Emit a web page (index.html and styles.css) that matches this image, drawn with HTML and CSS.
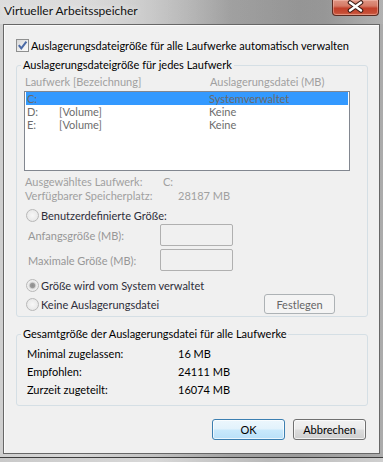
FILE: index.html
```html
<!DOCTYPE html>
<html lang="de">
<head>
    <meta charset="UTF-8">
    <title>Virtueller Arbeitsspeicher</title>
    <link rel="stylesheet" href="styles.css">
</head>
<body>
    <div class="window">
        <div class="titlebar">
            <span class="title">Virtueller Arbeitsspeicher</span>
            <div class="close-btn">
                <svg width="47" height="16" viewBox="0 0 47 16">
                    <path d="M18 3.5 L29 11.5 M29 3.5 L18 11.5" stroke="#3b1c16" stroke-width="4.6" stroke-linecap="round" fill="none"/>
                    <path d="M18 3.5 L29 11.5 M29 3.5 L18 11.5" stroke="#ffffff" stroke-width="2.4" stroke-linecap="round" fill="none"/>
                </svg>
            </div>
        </div>

        <div class="client">
            <div class="check-row">
                <span class="checkbox">
                    <svg width="11" height="11" viewBox="0 0 11 11">
                        <path d="M1.8 5.2 L4.3 8.4 L9.4 1.6" stroke="#4b6aa6" stroke-width="2" fill="none"/>
                    </svg>
                </span>
                <span>Auslagerungsdateigröße für alle Laufwerke automatisch verwalten</span>
            </div>

            <fieldset class="group">
                <legend>Auslagerungsdateigröße für jedes Laufwerk</legend>
                <div class="group-body drives">
                    <div class="list-head">
                        <span class="col-drive-head">Laufwerk [Bezeichnung]</span>
                        <span>Auslagerungsdatei (MB)</span>
                    </div>
                    <div class="listbox">
                        <div class="list-row selected">
                            <span class="col-drive">C:</span>
                            <span class="col-label"></span>
                            <span>Systemverwaltet</span>
                        </div>
                        <div class="list-row">
                            <span class="col-drive">D:</span>
                            <span class="col-label">[Volume]</span>
                            <span>Keine</span>
                        </div>
                        <div class="list-row">
                            <span class="col-drive">E:</span>
                            <span class="col-label">[Volume]</span>
                            <span>Keine</span>
                        </div>
                    </div>

                    <div class="info-row first">
                        <span class="info-label short">Ausgewähltes Laufwerk:</span>
                        <span>C:</span>
                    </div>
                    <div class="info-row">
                        <span class="info-label long">Verfügbarer Speicherplatz:</span>
                        <span>28187 MB</span>
                    </div>

                    <div class="radio-row custom">
                        <span class="radio"></span>
                        <span>Benutzerdefinierte Größe:</span>
                    </div>
                    <div class="size-row first">
                        <span class="size-label">Anfangsgröße (MB):</span>
                        <span class="textbox"></span>
                    </div>
                    <div class="size-row">
                        <span class="size-label">Maximale Größe (MB):</span>
                        <span class="textbox"></span>
                    </div>
                    <div class="radio-row system">
                        <span class="radio checked"></span>
                        <span>Größe wird vom System verwaltet</span>
                    </div>
                    <div class="radio-row none">
                        <span class="radio"></span>
                        <span>Keine Auslagerungsdatei</span>
                        <button class="btn btn-set">Festlegen</button>
                    </div>
                </div>
            </fieldset>

            <fieldset class="group totals">
                <legend>Gesamtgröße der Auslagerungsdatei für alle Laufwerke</legend>
                <div class="group-body sums">
                    <div class="sum-row">
                        <span class="sum-label">Minimal zugelassen:</span>
                        <span>16 MB</span>
                    </div>
                    <div class="sum-row">
                        <span class="sum-label">Empfohlen:</span>
                        <span>24111 MB</span>
                    </div>
                    <div class="sum-row">
                        <span class="sum-label">Zurzeit zugeteilt:</span>
                        <span>16074 MB</span>
                    </div>
                </div>
            </fieldset>

            <div class="actions">
                <button class="btn btn-ok">OK</button>
                <button class="btn btn-cancel">Abbrechen</button>
            </div>
        </div>
    </div>
</body>
</html>
```
FILE: styles.css
```css
* {
    margin: 0;
    padding: 0;
    box-sizing: border-box;
}

body {
    width: 383px;
    height: 462px;
    overflow: hidden;
    font-family: Lato, "Liberation Sans", sans-serif;
    font-size: 11px;
    color: #000;
    background: linear-gradient(90deg, #c9c9c9 0%, #d8d8d8 40%, #b9b9b9 70%, #cfcfcf 100%);
}

.window {
    width: 383px;
    height: 458px;
    border-bottom: 1px solid #3d3d3d;
    background: linear-gradient(90deg, #cfcfcf 0%, #d6d6d6 20%, #c2c2c2 40%, #a3a3a3 60%, #9c9c9c 78%, #ababab 100%);
}

.titlebar {
    height: 24px;
    display: flex;
    justify-content: space-between;
    align-items: flex-start;
    background: linear-gradient(90deg, rgba(230, 230, 230, 0.6) 0%, rgba(220, 220, 220, 0.4) 35%, rgba(150, 150, 150, 0.2) 60%, rgba(120, 120, 120, 0.25) 85%, rgba(190, 190, 190, 0.3) 100%);
}

.title {
    padding: 3px 0 0 4px;
    font-size: 12px;
    line-height: 15px;
    color: #111;
    text-shadow: 0 0 6px rgba(255, 255, 255, 0.9);
}

.close-btn {
    width: 47px;
    height: 16px;
    margin-right: 4px;
    border: 1px solid #5b2a20;
    border-top: none;
    border-radius: 0 0 4px 4px;
    background: linear-gradient(180deg, #de9583 0%, #d57a66 40%, #c2402a 55%, #c64d35 85%, #d26a50 100%);
    box-shadow: inset 0 0 0 1px rgba(255, 210, 200, 0.4);
}

.close-btn svg {
    display: block;
    margin: -1px 0 0 -1px;
}

.client {
    width: 377px;
    height: 430px;
    margin: 0 3px;
    padding-top: 14px;
    border: 1px solid #676767;
    background: #f0f0f0;
    box-shadow: inset 1px 1px 0 #fbfbfb;
}

.check-row {
    display: flex;
    align-items: center;
    gap: 2px;
    height: 13px;
    line-height: 13px;
    padding-left: 12px;
}

.checkbox {
    width: 13px;
    height: 13px;
    border: 1px solid #8e8f8f;
    background: linear-gradient(135deg, #d7d7d7 0%, #f0f0f0 60%, #fafafa 100%);
}

.checkbox svg {
    display: block;
}

.group {
    width: 352px;
    margin: 6px 0 0 12px;
    border: 1px solid #d5dfe5;
    border-radius: 3px;
    min-width: 0;
}

.group legend {
    margin-left: 4px;
    padding: 0 2px;
    line-height: 14px;
}

.group.totals {
    margin-top: 10px;
}

.group-body.drives {
    padding: 3px 0 2px 7px;
}

.list-head {
    display: flex;
    padding-left: 1px;
    line-height: 14px;
    color: #a0a0a0;
}

.col-drive-head {
    width: 185px;
}

.listbox {
    width: 326px;
    height: 80px;
    margin-top: 2px;
    border: 1px solid #828790;
    background: #fff;
}

.list-row {
    display: flex;
    height: 13px;
    line-height: 13px;
    margin: 0 1px;
    padding-left: 1px;
    color: #6d6d6d;
}

.list-row.selected {
    background: #3399ff;
    color: #6a6a6a;
}

.col-drive {
    width: 32px;
}

.col-label {
    width: 150px;
}

.info-row {
    display: flex;
    padding-left: 1px;
    line-height: 14px;
    color: #a0a0a0;
}

.info-row.first {
    margin-top: 4px;
}

.info-label.short {
    width: 138px;
}

.info-label.long {
    width: 153px;
}

.radio-row {
    display: flex;
    align-items: center;
    gap: 2px;
    padding-left: 2px;
    color: #2e2e3a;
}

.radio-row.custom {
    height: 16px;
    margin-top: 4px;
}

.radio-row.system {
    height: 16px;
    margin-top: 6px;
}

.radio-row.none {
    height: 20px;
    margin-top: 1px;
}

.radio {
    width: 13px;
    height: 13px;
    border: 1px solid #b8b8b8;
    border-radius: 50%;
    background: radial-gradient(circle at 50% 50%, #f7f7f7 0%, #ebebeb 60%, #dedede 100%);
}

.radio.checked {
    background: radial-gradient(circle at 50% 50%, #8d8d8d 0, #9a9a9a 2.2px, #d4d4d4 3.2px, #ececec 4.2px, #f4f4f4 100%);
}

.size-row {
    display: flex;
    align-items: center;
    padding-left: 4px;
    color: #979797;
}

.size-row.first {
    margin-top: 1px;
}

.size-row + .size-row {
    margin-top: 3px;
}

.size-label {
    width: 132px;
}

.textbox {
    width: 73px;
    height: 22px;
    border: 1px solid #b0b0b0;
    border-radius: 2px;
    background: #f0f0f0;
}

.btn {
    font-family: inherit;
    font-size: 11px;
    height: 21px;
    border-radius: 3px;
    text-align: center;
}

.btn-set {
    width: 71px;
    height: 20px;
    margin: 0 32px 0 auto;
    border: 1px solid #adb2b5;
    background: #f4f4f4;
    color: #666;
}

.group-body.sums {
    padding: 4px 0 6px 10px;
}

.sum-row {
    display: flex;
    line-height: 18px;
}

.sum-label {
    width: 151px;
}

.actions {
    display: flex;
    justify-content: flex-end;
    gap: 8px;
    margin-top: 13px;
    padding-right: 13px;
}

.btn-ok,
.btn-cancel {
    width: 73px;
    color: #000;
}

.btn-ok {
    border: 1px solid #3c7fb1;
    background: linear-gradient(180deg, #ecf7fd 0%, #e2f2fc 48%, #c9e9fc 52%, #b9e0f8 100%);
    box-shadow: inset 0 0 0 1px rgba(255, 255, 255, 0.7);
}

.btn-cancel {
    border: 1px solid #707070;
    background: linear-gradient(180deg, #f2f2f2 0%, #ebebeb 48%, #dddddd 52%, #cfcfcf 100%);
    box-shadow: inset 0 0 0 1px rgba(255, 255, 255, 0.7);
}
```
